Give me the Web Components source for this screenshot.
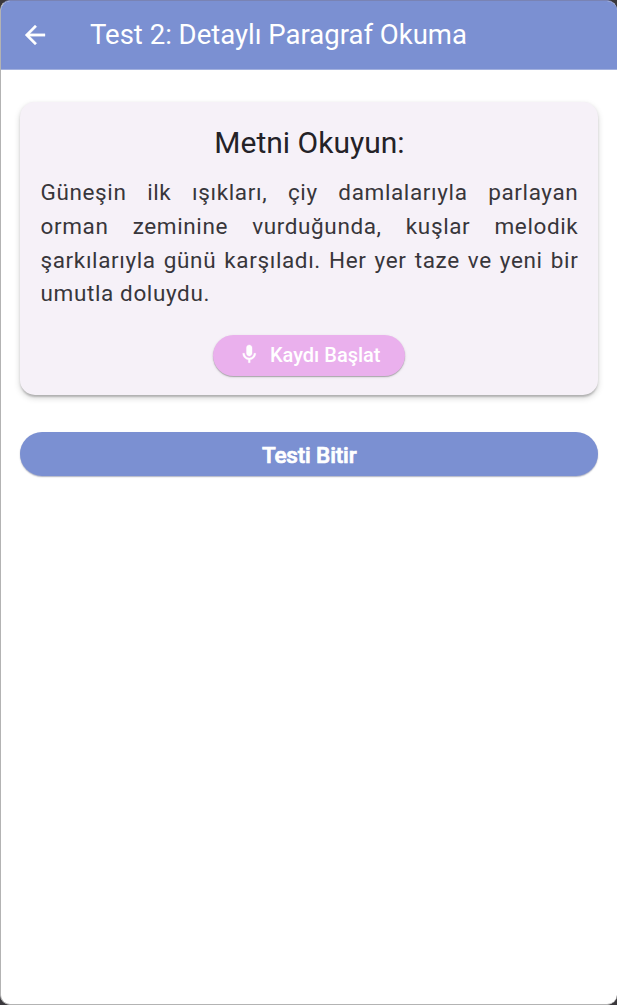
<!DOCTYPE html>
<html lang="tr">
<head>
<meta charset="utf-8">
<title>Test 2</title>
<style>
html, body { margin: 0; height: 100%; overflow: hidden; background: #3a383c; }
body { font-family: Roboto, "Liberation Sans", sans-serif; color: #242227; }
</style>
</head>
<body>
<app-window>
  <app-bar slot="bar">Test 2: Detaylı Paragraf Okuma</app-bar>
  <reading-card heading="Metni Okuyun:">Güneşin ilk ışıkları, çiy damlalarıyla parlayan orman zeminine vurduğunda, kuşlar melodik şarkılarıyla günü karşıladı. Her yer taze ve yeni bir umutla doluydu.<record-button slot="action">Kaydı Başlat</record-button></reading-card>
  <finish-button>Testi Bitir</finish-button>
</app-window>
<script>
const define = (name, html) => {
  const template = document.createElement('template');
  template.innerHTML = html;
  customElements.define(name, class extends HTMLElement {
    constructor() {
      super();
      this.attachShadow({ mode: 'open' }).append(template.content.cloneNode(true));
    }
    connectedCallback() {
      const h = this.shadowRoot.querySelector('h2');
      if (h) h.textContent = this.getAttribute('heading');
    }
  });
};

define('app-window', `
<style>
:host { display: flex; flex-direction: column; box-sizing: border-box; height: 100vh; overflow: hidden;
  background: #fff; border-radius: 10px; border: 1px solid #b3b3b3; border-top-color: #7983b4; border-right: 0; }
main { display: flex; flex-direction: column; gap: 37.5px; padding: 32px 18.6px 0 19px; }
</style>
<slot name="bar"></slot><main><slot></slot></main>`);

define('app-bar', `
<style>
:host { display: flex; align-items: center; box-sizing: border-box; height: 69px; margin-left: -1px; flex: none;
  padding: 0 0 0 20px; background: #7b90d2; color: #fff; border-bottom: 1px solid #a3b1de; }
svg { width: 30px; height: 30px; margin-right: 40px; fill: currentColor; stroke: currentColor; stroke-width: .25; }
h1 { margin: 0; font-size: 27.5px; font-weight: 400; line-height: 36px; white-space: nowrap; }
</style>
<svg viewBox="0 0 24 24"><path d="M20 11H7.83l5.59-5.59L12 4l-8 8 8 8 1.41-1.41L7.83 13H20v-2z"/></svg>
<h1><slot></slot></h1>`);

define('reading-card', `
<style>
:host { display: flex; flex-direction: column; box-sizing: border-box; height: 292.5px; padding: 21px 20px 0 20.5px;
  background: #f6f1f8; border-radius: 15px;
  box-shadow: 0 3px 2px -1px rgba(0,0,0,.16), 0 3px 6px rgba(0,0,0,.17), 0 1px 3px rgba(0,0,0,.08); }
h2 { margin: 0 0 13px; text-align: center; font-size: 30px; font-weight: 400; line-height: 40px; }
p { margin: 0 0 24px; font-size: 22.5px; line-height: 33.75px; letter-spacing: .625px; text-align: justify; color: #38363b; }
</style>
<h2></h2><p><slot></slot></p><slot name="action"></slot>`);

define('record-button', `
<style>
:host { display: flex; align-items: center; justify-content: center; align-self: center; box-sizing: border-box;
  width: 192px; height: 41px; padding-bottom: 1px; border-radius: 21px; background: #eab0ed; color: #fff;
  box-shadow: 0 1px 1px rgba(0,0,0,.24), 0 1px 3px rgba(0,0,0,.13); }
svg { width: 22.5px; height: 22.5px; margin: 0 9px 1px 0; fill: currentColor; stroke: currentColor; stroke-width: .3; }
span { font-size: 20px; font-weight: 500; line-height: 28px; white-space: nowrap; }
</style>
<svg viewBox="0 0 24 24"><path d="M12 14c1.66 0 3-1.34 3-3V5c0-1.66-1.34-3-3-3S9 3.34 9 5v6c0 1.66 1.34 3 3 3zm5-3c0 2.76-2.24 5-5 5s-5-2.24-5-5H5c0 3.53 2.61 6.43 6 6.92V21h2v-3.08c3.39-.49 6-3.39 6-6.92h-2z"/></svg>
<span><slot></slot></span>`);

define('finish-button', `
<style>
:host { display: flex; align-items: center; justify-content: center; box-sizing: border-box; height: 43.5px;
  padding-top: 2.5px; border-radius: 22px; background: #7b90d2; color: #fff;
  box-shadow: 0 1px 1px rgba(70,80,130,.3), 0 1px 2px rgba(0,0,0,.12); }
span { font-size: 22.5px; font-weight: 500; line-height: 30px; letter-spacing: -.15px; -webkit-text-stroke: .7px currentColor; }
</style>
<span><slot></slot></span>`);
</script>
</body>
</html>
